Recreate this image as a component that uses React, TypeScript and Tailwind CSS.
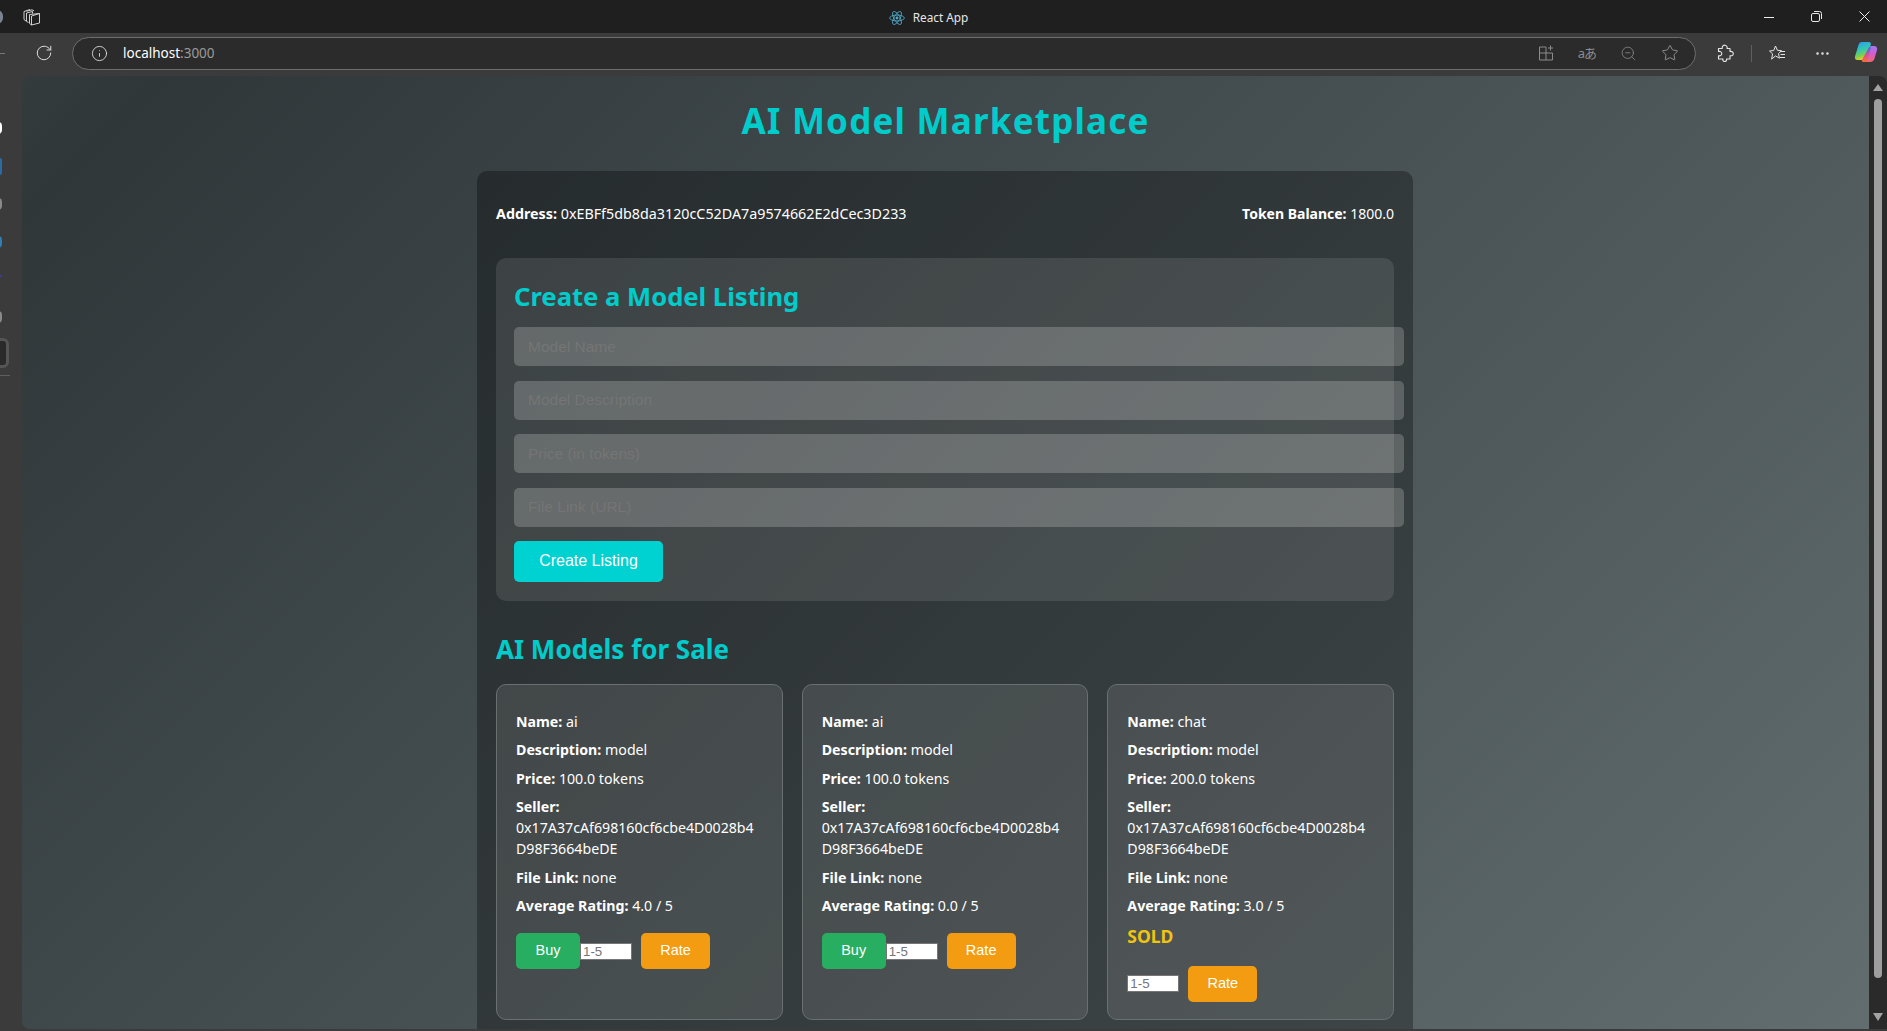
import React from "react";
import { RotateCw, Info, Star, ZoomOut, MoreHorizontal } from "lucide-react";

const UI = "font-['Noto_Sans','Open_Sans','Noto_Sans_CJK_JP',sans-serif]";

function ReactLogo() {
  return (
    <svg width="16" height="16" viewBox="-12 -12 24 24" fill="none" stroke="#4fa9c9" strokeWidth="1.3">
      <circle r="2.2" fill="#4fa9c9" stroke="none" />
      <ellipse rx="11" ry="4.4" />
      <ellipse rx="11" ry="4.4" transform="rotate(60)" />
      <ellipse rx="11" ry="4.4" transform="rotate(120)" />
    </svg>
  );
}

function TabsIcon() {
  return (
    <svg width="18" height="18" viewBox="0 0 18 18" fill="none" stroke="#cfcfcf" strokeWidth="1">
      <path d="M1 3.500 7 1.500M1 3.500v8l2 1.500M3.500 3.200 9 1.800l2 1" />
      <path d="M3.500 5 9.500 3.500v2M3.500 5v8.500l2 1" />
      <path d="M6.500 6.500 16.500 5.500V15l-8 2-2-1.500z" />
      <path d="M8.500 8v9M8.500 8l8-2.500" />
    </svg>
  );
}

function MinimizeIcon() {
  return (
    <svg width="10" height="10" viewBox="0 0 10 10" stroke="#ededed" strokeWidth="1">
      <path d="M0 5.500h10" />
    </svg>
  );
}

function RestoreIcon() {
  return (
    <svg width="11" height="11" viewBox="0 0 11 11" fill="none" stroke="#e8e8e8" strokeWidth="1">
      <rect x="0.500" y="2.500" width="8" height="8" rx="1.500" />
      <path d="M3 .5h5.500a2 2 0 0 1 2 2V8" />
    </svg>
  );
}

function CloseIcon() {
  return (
    <svg width="11" height="11" viewBox="0 0 11 11" stroke="#ededed" strokeWidth="1">
      <path d="M.5.5l10 10M10.500.5l-10 10" />
    </svg>
  );
}

function SplitIcon() {
  return (
    <svg width="16" height="16" viewBox="0 0 16 16" fill="none" stroke="#8c8c8c" strokeWidth="1">
      <path d="M8 2H1.500v13h13V8H1.500M8 2v13M12.500 .5v5M10 3h5" />
    </svg>
  );
}

function FavoritesIcon() {
  return (
    <svg width="18" height="18" viewBox="0 0 18 18" fill="none" stroke="#e4e4e4" strokeWidth="1">
      <path d="M7.500 2 9.400 6.300l4.100.4-3 2.900.9 4.600-3.900-2.300-3.900 3.200 1-5.200-3.100-2.900 4.200-.5z" />
      <path d="M12 7.500h5M12.500 10.500h4.500M12 13.500h5" />
    </svg>
  );
}

function PuzzleIcon() {
  return (
    <svg width="18" height="18" viewBox="0 0 18 18" fill="none" stroke="#e6e6e6" strokeWidth="1.100" strokeLinejoin="round">
      <path d="M2.500 4.500H6.200C6 2 7.500 1 9 1.200 10.800 1.500 11.500 3 11 4.500H14V7.500C16.300 7 17.300 8.500 17.300 9.700S16.300 12.200 14 11.700V15H10.500C11 17 9.500 17.500 8.500 17.500S6.500 16.500 7 15H2.500V11.700C4.500 12.300 5.800 11 5.800 9.600S4.500 7 2.500 7.500Z" />
    </svg>
  );
}

function Copilot() {
  return (
    <svg width="24" height="24" viewBox="0 0 24 24">
      <defs>
        <linearGradient id="cpa" x1="0.2" y1="0" x2="0.5" y2="1">
          <stop offset="0" stopColor="#2b9cf2" />
          <stop offset="0.45" stopColor="#34c8b0" />
          <stop offset="0.75" stopColor="#7ed04a" />
          <stop offset="1" stopColor="#f7cf1e" />
        </linearGradient>
        <linearGradient id="cpb" x1="0.5" y1="0" x2="0.5" y2="1">
          <stop offset="0" stopColor="#9a7cf2" />
          <stop offset="0.5" stopColor="#d85ad0" />
          <stop offset="1" stopColor="#f06a6a" />
        </linearGradient>
        <linearGradient id="cpc" x1="0.5" y1="0" x2="0.5" y2="1">
          <stop offset="0" stopColor="#3b6de8" />
          <stop offset="0.6" stopColor="#e0508a" />
          <stop offset="1" stopColor="#f5722c" />
        </linearGradient>
      </defs>
      <path d="M8 1h7c1.500 0 2.300 1 1.800 2.500L12 17c-.5 1.300-1.500 2-3 2H3.500C1.500 19 .4 17.500 1 15.500L4.500 4C5.200 2 6 1 8 1z" fill="url(#cpa)" />
      <path d="M16.500 5H20c2.500 0 3.600 1.800 3 4l-2.500 8.500c-.6 2-2 3.500-4.500 3.500h-5l2-7z" fill="url(#cpb)" />
      <path d="M14.500 7c.8-1.500 2.500-1.500 2.200.5L14 16.500c-.6 2.500-1.500 4.500-3 4.500H9.300c-1.300 0-1.800-1-1.300-2.200z" fill="url(#cpc)" />
    </svg>
  );
}

function Toolbar() {
  return (
    <div className="flex h-[43px] shrink-0 items-center bg-[#3b3b3b] pb-[3px] pl-[35px]">
      <div className="ml-[-35px] mr-[30px] h-px w-[5px] bg-[#777]" />
      <RotateCw size={18} strokeWidth={1.3} color="#e0e0e0" />
      <div className="ml-[19px] flex h-[33px] w-[1624px] shrink-0 items-center rounded-full border border-[#6e6e6e] bg-[#2b2b2b] pl-[18px] pr-[16px]">
        <Info size={17} strokeWidth={1.2} color="#e6e6e6" />
        <span className={`ml-[15px] text-[13.500px] text-white ${UI}`}>
          localhost<span className="text-[#9a9a9a]">:3000</span>
        </span>
        <div className="ml-auto flex items-center gap-[24px]">
          <SplitIcon />
          <span className={`whitespace-nowrap text-[13px] leading-none tracking-[-1px] text-[#8c8c8c] ${UI}`}>aあ</span>
          <ZoomOut size={17} strokeWidth={1.1} color="#8c8c8c" />
          <Star size={18} strokeWidth={1.1} color="#a0a0a0" />
        </div>
      </div>
      <div className="ml-[20px] flex shrink-0 items-center">
        <PuzzleIcon />
      </div>
      <div className="ml-[17px] h-[17px] w-px shrink-0 bg-[#5f5f5f]" />
      <div className="ml-[16px] shrink-0">
        <FavoritesIcon />
      </div>
      <MoreHorizontal className="ml-[28px] shrink-0" size={17} color="#e4e4e4" strokeWidth={1.6} />
      <div className="ml-[23px] shrink-0">
        <Copilot />
      </div>
    </div>
  );
}

function TitleBar() {
  return (
    <div className="flex h-[33px] shrink-0 items-center bg-[#1f1f1f]">
      <div className="ml-[-9px] h-[14px] w-[12px] rounded-full bg-[#7c8390]" />
      <div className="ml-[20px]">
        <TabsIcon />
      </div>
      <div className="flex flex-1 items-center justify-center gap-[8px] pl-[52px] pt-[2px]">
        <ReactLogo />
        <span className={`text-[11.800px] text-[#e6e6e6] ${UI}`}>React App</span>
      </div>
      <div className="flex items-center gap-[37px] pr-[17px]">
        <MinimizeIcon />
        <RestoreIcon />
        <CloseIcon />
      </div>
    </div>
  );
}

function SideStrip() {
  return (
    <div className="flex w-[22px] shrink-0 flex-col bg-[#3b3b3b]">
      <div className="ml-[-6px] mt-[46px] h-[12px] w-[8px] rounded-full bg-white" />
      <div className="ml-[-6px] mt-[24px] h-[17px] w-[8px] rounded-[2px] bg-[#2a6aa5]" />
      <div className="ml-[-6px] mt-[23px] h-[12px] w-[8px] rounded-full bg-[#8a8a8a]" />
      <div className="ml-[-6px] mt-[26px] h-[12px] w-[8px] rounded-full bg-[#2f7fb5]" />
      <div className="ml-[-4px] mt-[27px] h-[2px] w-[6px] bg-[#3a3aa0]" />
      <div className="ml-[-6px] mt-[34px] h-[12px] w-[8px] rounded-full bg-[#8a8a8a]" />
      <div className="ml-[-10px] mt-[15px] h-[30px] w-[19px] rounded-[6px] border-[3px] border-[#555] bg-[#2a2a2a]" />
      <div className="mt-[7px] h-px w-[10px] bg-[#5f5f5f]" />
    </div>
  );
}

function Scrollbar() {
  return (
    <div className="flex w-[18px] shrink-0 flex-col items-center rounded-tr-[8px] bg-[#2a2a2a] pt-[8px]">
      <div className="h-0 w-0 border-x-[5.500px] border-b-[7px] border-x-transparent border-b-[#a3a3a3]" />
      <div className="mt-[8px] h-[879px] w-[8px] rounded-full bg-[#9e9e9e]" />
      <div className="mb-[8px] mt-auto h-0 w-0 border-x-[5.500px] border-t-[8px] border-x-transparent border-t-[#a3a3a3]" />
    </div>
  );
}

const fields = ["Model Name", "Model Description", "Price (in tokens)", "File Link (URL)"];

const models = [
  { name: "ai", price: "100.0", rating: "4.0", sold: false },
  { name: "ai", price: "100.0", rating: "0.0", sold: false },
  { name: "chat", price: "200.0", rating: "3.0", sold: true },
];

function Row({ label, value }: { label: string; value: string }) {
  return (
    <p className="mb-[7.500px] text-[14.200px] leading-[21px] text-white">
      <strong className="font-bold">{label}:</strong> {value}
    </p>
  );
}

function RateInput() {
  return (
    <input
      placeholder="1-5"
      className="h-[17px] w-[52px] border border-[#767676] bg-white px-[2px] font-['Liberation_Sans',sans-serif] text-[13.300px] leading-none placeholder:text-[#757575]"
    />
  );
}

function ModelCard({ m }: { m: (typeof models)[number] }) {
  return (
    <div className="h-[336px] rounded-[10px] border border-[#6a7072] bg-[rgba(255,255,255,0.1)] px-[19px] pt-[25.500px]">
      <Row label="Name" value={m.name} />
      <Row label="Description" value="model" />
      <Row label="Price" value={`${m.price} tokens`} />
      <p className="mb-[7.500px] break-all text-[14.200px] leading-[21px] text-white">
        <strong className="font-bold">Seller:</strong> <br />
        0x17A37cAf698160cf6cbe4D0028b4D98F3664beDE
      </p>
      <Row label="File Link" value="none" />
      <Row label="Average Rating" value={`${m.rating} / 5`} />
      {m.sold && <p className="mt-[6px] text-[17.500px] font-bold leading-[24px] text-[#f1c40f]">SOLD</p>}
      <div className={`flex items-center ${m.sold ? "mt-[18px]" : "mt-[17px]"}`}>
        {!m.sold && (
          <button className="h-[36px] w-[64px] rounded-[5px] bg-[#27ae60] font-['Liberation_Sans',sans-serif] text-[14.500px] text-white">
            Buy
          </button>
        )}
        <RateInput />
        <button className="ml-[9px] h-[36px] w-[69px] rounded-[5px] bg-[#f39c12] font-['Liberation_Sans',sans-serif] text-[14.500px] text-white">
          Rate
        </button>
      </div>
    </div>
  );
}

export default function App() {
  return (
    <div className="flex h-screen flex-col overflow-hidden bg-[#3b3b3b]">
      <TitleBar />
      <Toolbar />
      <div className="flex min-h-0 flex-1 pb-[2px]">
        <SideStrip />
        <div
          className={`min-w-0 flex-1 overflow-hidden rounded-l-[8px] bg-[linear-gradient(135deg,#343b3d_0%,#2f3739_5%,#626d6f_100%)] ${UI}`}
        >
          <h1 className="pt-[21px] text-center text-[35px] font-bold leading-[48px] tracking-[1.200px] text-[#00cccc]">
            AI Model Marketplace
          </h1>
          <div className="ml-[455px] mt-[26px] w-[936px] rounded-t-[10px] bg-[rgba(0,0,0,0.3)] px-[19px] pb-[40px] pt-[33px]">
            <div className="flex items-baseline justify-between text-[14.300px] font-normal leading-[20px] text-white">
              <span>
                <strong className="font-bold">Address:</strong> 0xEBFf5db8da3120cC52DA7a9574662E2dCec3D233
              </span>
              <span className="text-[14px]">
                <strong className="font-bold">Token Balance:</strong> 1800.0
              </span>
            </div>
            <div className="mt-[34px] h-[343px] rounded-[10px] bg-[rgba(255,255,255,0.1)] px-[18px] pt-[21px]">
              <h2 className="text-[25.600px] font-bold leading-[36px] text-[#00cccc]">Create a Model Listing</h2>
              <div className="mt-[12px] flex w-[890px] flex-col gap-[14.500px]">
                {fields.map((f) => (
                  <input
                    key={f}
                    placeholder={f}
                    className="h-[39px] w-full rounded-[5px] bg-[rgba(255,255,255,0.2)] px-[14px] font-['Liberation_Sans',sans-serif] text-[15.500px] text-white placeholder:text-[#757575]"
                  />
                ))}
              </div>
              <button className="mt-[14px] h-[41px] w-[149px] rounded-[5px] bg-[#00d1d1] font-['Liberation_Sans',sans-serif] text-[16px] text-white">
                Create Listing
              </button>
            </div>
            <h2 className="mt-[30px] text-[26px] font-bold leading-[36px] text-[#00cccc]">AI Models for Sale</h2>
            <div className="mt-[17px] grid grid-cols-3 gap-[19px]">
              {models.map((m, i) => (
                <ModelCard key={i} m={m} />
              ))}
            </div>
          </div>
        </div>
        <Scrollbar />
      </div>
    </div>
  );
}
